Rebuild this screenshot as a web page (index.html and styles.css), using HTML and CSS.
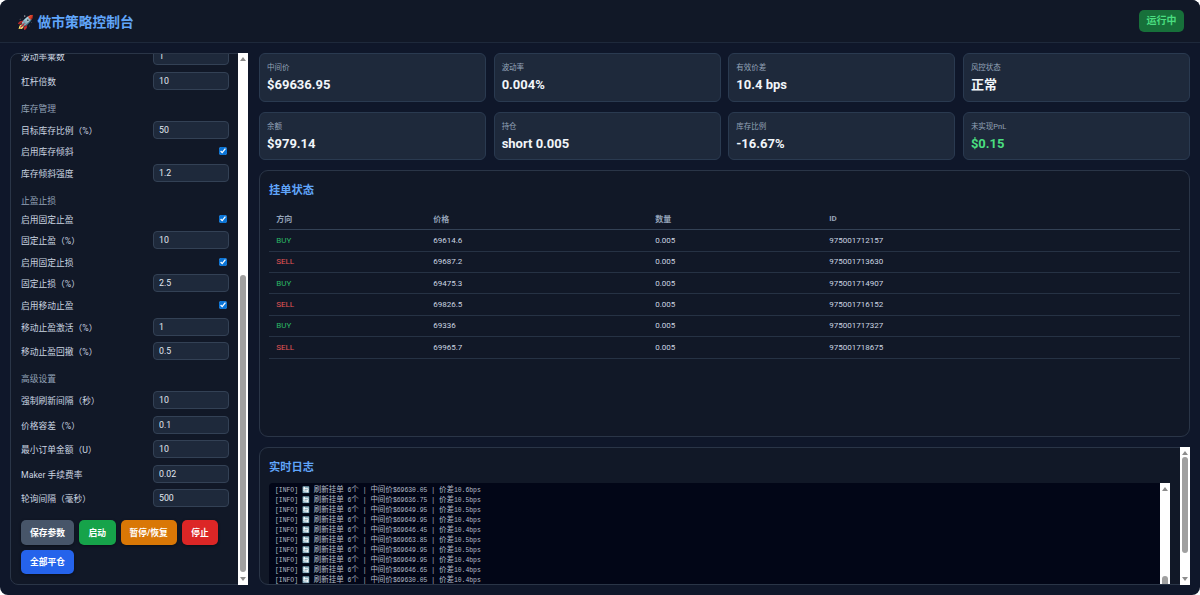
FILE: index.html
```html
<!DOCTYPE html>
<html>
<head>
    <meta charset="utf-8" />
    <title>做市策略控制台</title>
    <link rel="stylesheet" href="styles.css">
</head>
<body>
    <header class="top-bar">
        <h1 class="app-title">🚀 做市策略控制台</h1>
        <span class="status-badge">运行中</span>
    </header>
    <div class="layout">
        <aside class="side-panel">
            <div class="side-scroll">
                <div class="field"><label>波动率乘数</label><input type="text" value="1"></div>
                <div class="field"><label>杠杆倍数</label><input type="text" value="10"></div>
                <div class="section-title">库存管理</div>
                <div class="field"><label>目标库存比例（%）</label><input type="text" value="50"></div>
                <div class="field check"><label>启用库存倾斜</label><input type="checkbox" checked></div>
                <div class="field"><label>库存倾斜强度</label><input type="text" value="1.2"></div>
                <div class="section-title">止盈止损</div>
                <div class="field check"><label>启用固定止盈</label><input type="checkbox" checked></div>
                <div class="field"><label>固定止盈（%）</label><input type="text" value="10"></div>
                <div class="field check"><label>启用固定止损</label><input type="checkbox" checked></div>
                <div class="field"><label>固定止损（%）</label><input type="text" value="2.5"></div>
                <div class="field check"><label>启用移动止盈</label><input type="checkbox" checked></div>
                <div class="field"><label>移动止盈激活（%）</label><input type="text" value="1"></div>
                <div class="field"><label>移动止盈回撤（%）</label><input type="text" value="0.5"></div>
                <div class="section-title">高级设置</div>
                <div class="field"><label>强制刷新间隔（秒）</label><input type="text" value="10"></div>
                <div class="field"><label>价格容差（%）</label><input type="text" value="0.1"></div>
                <div class="field"><label>最小订单金额（U）</label><input type="text" value="10"></div>
                <div class="field"><label>Maker 手续费率</label><input type="text" value="0.02"></div>
                <div class="field"><label>轮询间隔（毫秒）</label><input type="text" value="500"></div>
                <div class="button-row">
                    <button class="btn btn-save">保存参数</button>
                    <button class="btn btn-start">启动</button>
                    <button class="btn btn-pause">暂停/恢复</button>
                    <button class="btn btn-stop">停止</button>
                    <button class="btn btn-close">全部平仓</button>
                </div>
            </div>
            <div class="scrollbar side-bar">
                <span class="arrow-up"></span>
                <span class="thumb"></span>
                <span class="arrow-down"></span>
            </div>
        </aside>
        <main class="content">
            <section class="stats">
                <div class="stat"><div class="stat-label">中间价</div><div class="stat-value">$69636.95</div></div>
                <div class="stat"><div class="stat-label">波动率</div><div class="stat-value">0.004%</div></div>
                <div class="stat"><div class="stat-label">有效价差</div><div class="stat-value">10.4 bps</div></div>
                <div class="stat"><div class="stat-label">风控状态</div><div class="stat-value">正常</div></div>
                <div class="stat"><div class="stat-label">余额</div><div class="stat-value">$979.14</div></div>
                <div class="stat"><div class="stat-label">持仓</div><div class="stat-value">short 0.005</div></div>
                <div class="stat"><div class="stat-label">库存比例</div><div class="stat-value">-16.67%</div></div>
                <div class="stat"><div class="stat-label">未实现PnL</div><div class="stat-value profit">$0.15</div></div>
            </section>
            <section class="card orders">
                <h2 class="card-title">挂单状态</h2>
                <table class="order-table">
                    <thead>
                        <tr><th>方向</th><th>价格</th><th>数量</th><th>ID</th></tr>
                    </thead>
                    <tbody>
                        <tr><td class="buy">BUY</td><td>69614.6</td><td>0.005</td><td>975001712157</td></tr>
                        <tr><td class="sell">SELL</td><td>69687.2</td><td>0.005</td><td>975001713630</td></tr>
                        <tr><td class="buy">BUY</td><td>69475.3</td><td>0.005</td><td>975001714907</td></tr>
                        <tr><td class="sell">SELL</td><td>69826.5</td><td>0.005</td><td>975001716152</td></tr>
                        <tr><td class="buy">BUY</td><td>69336</td><td>0.005</td><td>975001717327</td></tr>
                        <tr><td class="sell">SELL</td><td>69965.7</td><td>0.005</td><td>975001718675</td></tr>
                    </tbody>
                </table>
            </section>
            <section class="card logs">
                <div class="log-main">
                    <h2 class="card-title">实时日志</h2>
                    <div class="log-wrap">
                        <div class="log-box">
                            <div>[INFO] 🔄 <b>刷新挂单</b> 6<b>个</b> | <b>中间价</b>$69630.05 | <b>价差</b>10.6bps</div>
                            <div>[INFO] 🔄 <b>刷新挂单</b> 6<b>个</b> | <b>中间价</b>$69636.75 | <b>价差</b>10.5bps</div>
                            <div>[INFO] 🔄 <b>刷新挂单</b> 6<b>个</b> | <b>中间价</b>$69649.95 | <b>价差</b>10.5bps</div>
                            <div>[INFO] 🔄 <b>刷新挂单</b> 6<b>个</b> | <b>中间价</b>$69649.95 | <b>价差</b>10.4bps</div>
                            <div>[INFO] 🔄 <b>刷新挂单</b> 6<b>个</b> | <b>中间价</b>$69646.45 | <b>价差</b>10.4bps</div>
                            <div>[INFO] 🔄 <b>刷新挂单</b> 6<b>个</b> | <b>中间价</b>$69663.85 | <b>价差</b>10.5bps</div>
                            <div>[INFO] 🔄 <b>刷新挂单</b> 6<b>个</b> | <b>中间价</b>$69649.95 | <b>价差</b>10.5bps</div>
                            <div>[INFO] 🔄 <b>刷新挂单</b> 6<b>个</b> | <b>中间价</b>$69649.95 | <b>价差</b>10.4bps</div>
                            <div>[INFO] 🔄 <b>刷新挂单</b> 6<b>个</b> | <b>中间价</b>$69646.65 | <b>价差</b>10.4bps</div>
                            <div>[INFO] 🔄 <b>刷新挂单</b> 6<b>个</b> | <b>中间价</b>$69630.05 | <b>价差</b>10.4bps</div>
                        </div>
                        <div class="scrollbar inner-bar">
                            <span class="arrow-up"></span>
                            <span class="thumb"></span>
                        </div>
                    </div>
                </div>
                <div class="scrollbar log-bar">
                    <span class="arrow-up"></span>
                    <span class="thumb"></span>
                    <span class="arrow-down"></span>
                </div>
            </section>
        </main>
    </div>
</body>
</html>
```
FILE: styles.css
```css
* {
    box-sizing: border-box;
}
html {
    background: #fff;
}
body {
    margin: 0;
    height: 595px;
    overflow: hidden;
    background: #0f172a;
    border-radius: 8px;
    color: #e2e8f0;
    font-family: Roboto, "Noto Sans CJK SC", sans-serif;
    font-size: 8.75px;
}
.top-bar {
    height: 43px;
    display: flex;
    align-items: center;
    justify-content: space-between;
    padding: 0 16px 0 17px;
    background: #111827;
    border-bottom: 1px solid #1e293b;
}
.app-title {
    margin: 0;
    font-size: 13.75px;
    font-weight: 700;
    color: #60a5fa;
}
.status-badge {
    padding: 5px 7.5px;
    border-radius: 5px;
    background: #17703a;
    color: #4ade80;
    font-size: 10px;
    line-height: 12px;
    font-weight: 700;
}
.layout {
    display: flex;
    gap: 11px;
    height: 552px;
    padding: 10px;
}

/* 假滚动条 */
.scrollbar {
    flex: none;
    display: flex;
    flex-direction: column;
    align-items: center;
    width: 10px;
    padding: 4px 0;
    background: #fff;
}
.arrow-up,
.arrow-down {
    flex: none;
    width: 0;
    height: 0;
    border-left: 3px solid transparent;
    border-right: 3px solid transparent;
}
.arrow-up {
    border-bottom: 4px solid #8c8c8c;
}
.arrow-down {
    border-top: 4px solid #8c8c8c;
}
.thumb {
    flex: none;
    width: 6px;
    background: #a0a0a0;
    border-radius: 3px;
}
.side-bar {
    margin: -1px -1px -1px 0;
}
.side-bar .thumb {
    height: 297px;
    margin: auto 0 5px;
}
.log-bar {
    margin: -1px -1px -1px 0;
}
.log-bar .thumb {
    height: 96px;
    margin: 2px 0 auto;
}
.inner-bar .thumb {
    height: 80px;
    margin-top: 85px;
}

/* 左侧参数 */
.side-panel {
    flex: 0 0 238px;
    display: flex;
    height: 532px;
    background: #111827;
    border: 1px solid #2a3547;
    border-radius: 8px 0 0 8px;
}
.side-scroll {
    flex: 1;
    min-width: 0;
    display: flex;
    flex-direction: column;
    justify-content: flex-end;
    overflow: hidden;
    padding: 0 9px 10px 10px;
}
.section-title {
    flex: none;
    margin: 6.5px 0 6px;
    padding-top: 1px;
    color: #94a3b8;
    line-height: 11px;
}
.field {
    flex: none;
    display: flex;
    align-items: center;
    justify-content: space-between;
    margin-bottom: 6.5px;
    height: 18px;
    color: #cbd5e1;
}
.field label {
    padding-top: 1px;
}
.field.check {
    height: 12.1px;
}
.field input[type="text"] {
    width: 76px;
    height: 18px;
    padding: 0 5px;
    background: #1e293b;
    border: 1px solid #334155;
    border-radius: 4px;
    color: #e2e8f0;
    font: inherit;
}
.field input[type="checkbox"] {
    width: 8.5px;
    height: 8.5px;
    margin: 0 2px 0 0;
    accent-color: #0a74d6;
}
.button-row {
    flex: none;
    display: flex;
    flex-wrap: wrap;
    gap: 5px;
    margin-top: 6.5px;
}
.btn {
    height: 24.5px;
    padding: 0 9px;
    border: none;
    border-radius: 5px;
    color: #fff;
    font: inherit;
    font-weight: 700;
    white-space: nowrap;
    box-shadow: 0 1px 3px rgba(0, 0, 0, 0.4);
}
.btn-save { background: #475569; }
.btn-start { background: #16a34a; padding: 0 9.5px; }
.btn-pause { background: #d97706; }
.btn-stop { background: #dc2626; padding: 0 9.5px; }
.btn-close { background: #2563eb; }

/* 右侧内容 */
.content {
    flex: 1;
    min-width: 0;
    display: flex;
    flex-direction: column;
    gap: 10px;
}
.stats {
    flex: none;
    display: grid;
    grid-template-columns: repeat(4, 1fr);
    gap: 10px 7.5px;
}
.stat {
    height: 48.5px;
    padding: 8px 7px;
    background: #1e293b;
    border: 1px solid #2a3a50;
    border-radius: 6px;
}
.stat-label {
    color: #94a3b8;
    font-size: 7.5px;
    line-height: 11px;
    margin-bottom: 3px;
}
.stat-value {
    color: #f1f5f9;
    font-size: 13px;
    font-weight: 700;
    line-height: 18px;
}
.stat-value.profit {
    color: #4ade80;
}
.card {
    background: #111827;
    border: 1px solid #2a3547;
    border-radius: 9px;
}
.orders {
    flex: 1;
    min-height: 0;
    padding: 10px 9px;
}
.card-title {
    margin: 2px 0 7px;
    color: #60a5fa;
    font-size: 11.25px;
    font-weight: 700;
    line-height: 16px;
}
.order-table {
    width: 100%;
    margin-top: 9.3px;
    border-collapse: collapse;
    table-layout: fixed;
    font-size: 8px;
}
.order-table th,
.order-table td {
    height: 21.4px;
    padding: 0 7.25px;
    text-align: left;
    border-bottom: 1px solid #263244;
    color: #cbd5e1;
}
.order-table th {
    font-weight: 700;
    color: #94a3b8;
    border-bottom-color: #334155;
}
.order-table th:nth-child(1) { width: 157px; }
.order-table th:nth-child(2) { width: 222px; }
.order-table th:nth-child(3) { width: 174px; }
.order-table td.buy { color: #2bb765; }
.order-table td.sell { color: #e25555; }
.logs {
    flex: none;
    height: 138.5px;
    display: flex;
    border-radius: 9px 0 0 9px;
}
.log-main {
    flex: 1;
    min-width: 0;
    overflow: hidden;
    padding: 10px 10px 0 9px;
}
.log-wrap {
    display: flex;
    height: 200px;
}
.log-box {
    flex: 1;
    min-width: 0;
    padding: 1px 6px;
    background: #020617;
    border-radius: 4px 0 0 4px;
    color: #b4bcc8;
    font-family: "Liberation Mono", "Noto Sans CJK SC", monospace;
    font-size: 6.4px;
    line-height: 10px;
}
.log-box div {
    height: 10px;
    white-space: pre;
}
.log-box b {
    font-size: 7.5px;
    font-weight: 400;
    font-family: "Noto Sans CJK SC", sans-serif;
}
```
